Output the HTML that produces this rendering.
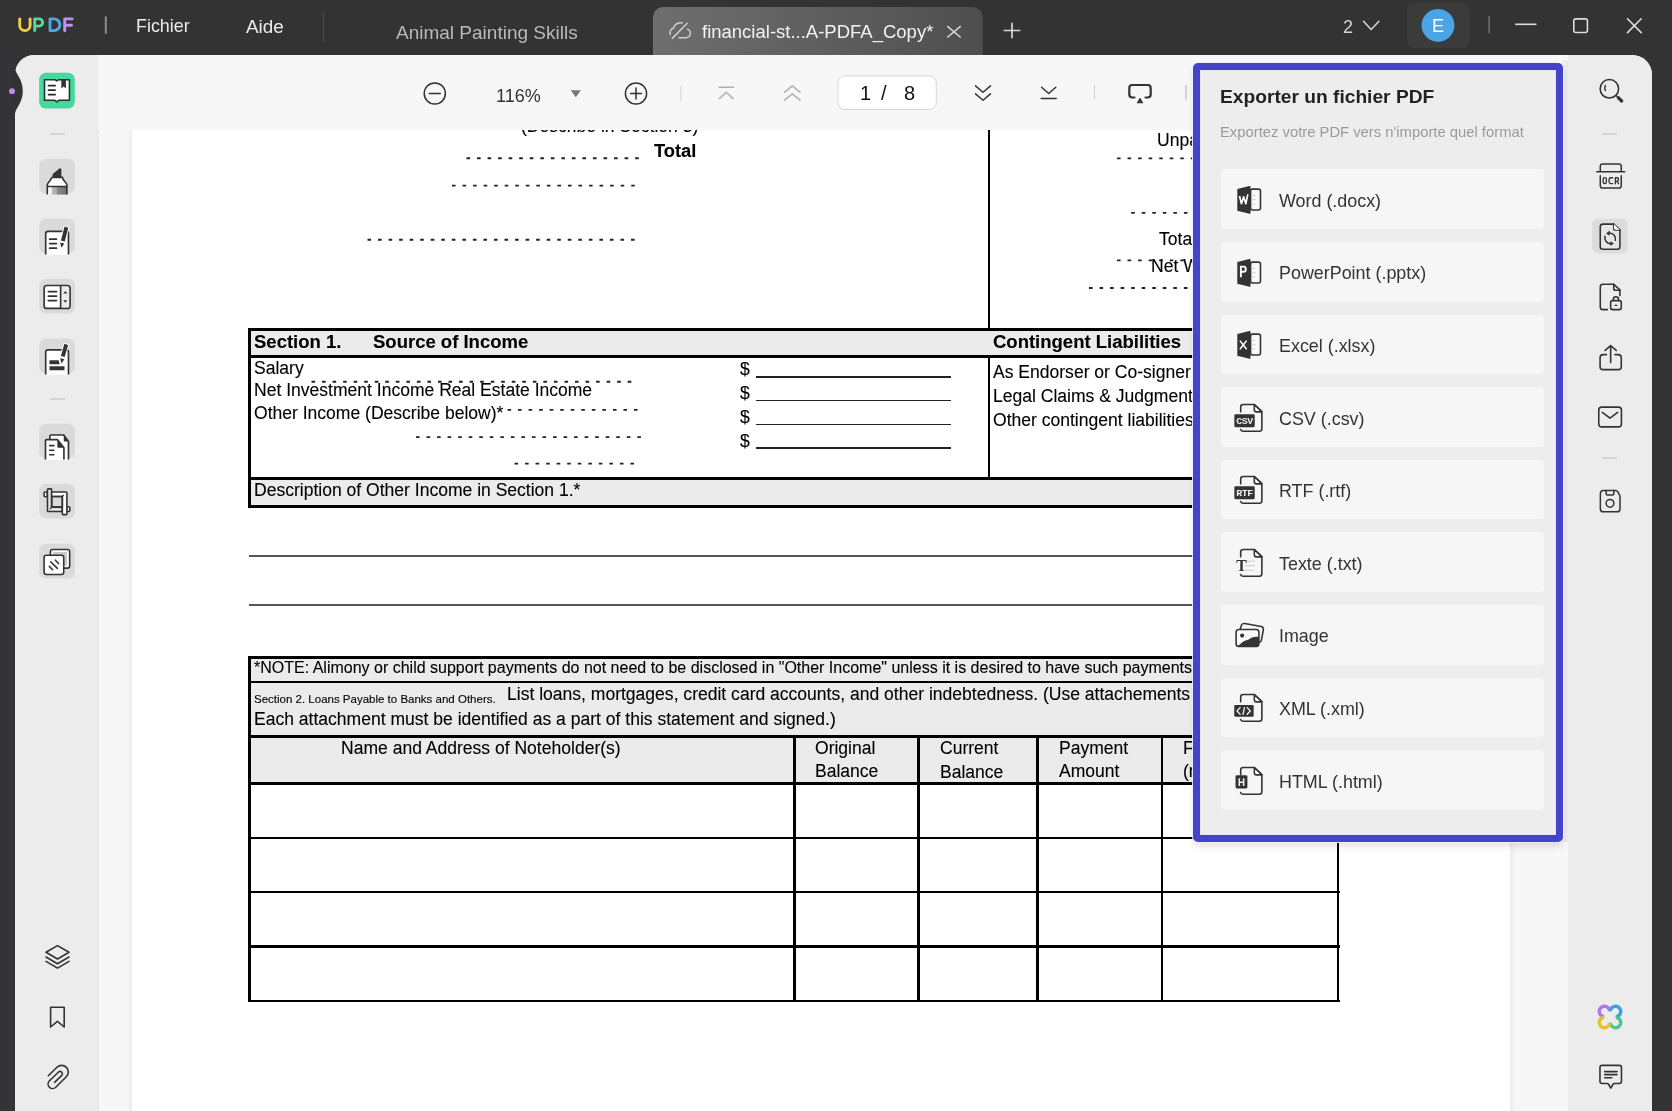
<!DOCTYPE html>
<html><head><meta charset="utf-8">
<style>
*{margin:0;padding:0;box-sizing:border-box}
html,body{width:1672px;height:1111px;overflow:hidden;background:#333333;font-family:"Liberation Sans",sans-serif}
.a{position:absolute}
.t{position:absolute;white-space:nowrap;line-height:1;will-change:transform}
svg{position:absolute;overflow:visible}
/* title bar */
#tb{left:0;top:0;width:1672px;height:55px;background:#333}
#dstrip{left:0;top:55px;width:15px;height:1056px;background:#343337}
#main{left:15px;top:55px;width:1637px;height:1056px;background:#f7f7f7;border-radius:20px 20px 0 0;overflow:hidden}
#lsb{left:15px;top:55px;width:83px;height:1056px;background:#ececec;border-top-left-radius:19px}
#rsb{left:1568px;top:55px;width:84px;height:1056px;background:#ececec;border-top-right-radius:20px}
#page{left:132px;top:130px;width:1378px;height:981px;background:#fff;overflow:hidden}
#pshL{left:127px;top:130px;width:5px;height:981px;background:linear-gradient(90deg,#f7f7f7,#ececec)}
#pshR{left:1510px;top:130px;width:6px;height:981px;background:linear-gradient(90deg,#ececec,#f7f7f7)}
#toolbar{left:98px;top:55px;width:1470px;height:75px;background:#f7f7f7}
.doc{font-family:"Liberation Sans",sans-serif;color:#000}
.doc .t{-webkit-text-stroke:0.12px #000}
.ui{font-family:"Liberation Sans",sans-serif}
.ib{position:absolute;background:#dcdcdc;border-radius:7px;width:36px;height:36px}
.sep{position:absolute;background:#d2d2d2}
/* panel */
#panel{left:1193px;top:63px;width:369.5px;height:778.5px;border:7px solid #4444c9;border-radius:5px;background:#ededed;box-shadow:inset 0 0 0 1px #e4e4fb,0 0 0 1px rgba(238,238,255,0.9),0 5px 6px rgba(0,0,0,0.10)}
.item{position:absolute;left:1220.5px;width:323.5px;height:59.5px;background:#f6f6f6;border-radius:4px}
.itxt{position:absolute;left:1279px;font-size:17.9px;color:#333;line-height:1;white-space:nowrap;will-change:transform}
</style></head><body>
<div id="tb" class="a"></div>
<div id="dstrip" class="a"></div>
<div id="main" class="a"></div>
<div id="lsb" class="a"></div>
<div id="rsb" class="a"></div>
<div id="pshL" class="a"></div>
<div id="pshR" class="a"></div>
<div id="page" class="a"><div class="a doc" id="docin" style="left:-132px;top:-130px;width:1672px;height:1111px">
<div class="t" style="left:520.8px;top:118.29px;font-size:17.55px;">(Describe in Section 3)</div>
<div class="t" style="left:654.3px;top:142.31px;font-size:18.3px;font-weight:bold;">Total</div>
<svg style="left:0;top:0" width="1" height="1"><line x1="466.5" y1="158.3" x2="640" y2="158.3" stroke="#222" stroke-width="1.9" stroke-dasharray="3.6 6.94"/></svg>
<svg style="left:0;top:0" width="1" height="1"><line x1="452" y1="185.6" x2="640" y2="185.6" stroke="#222" stroke-width="1.9" stroke-dasharray="3.6 6.94"/></svg>
<svg style="left:0;top:0" width="1" height="1"><line x1="367.5" y1="239.8" x2="640" y2="239.8" stroke="#222" stroke-width="1.9" stroke-dasharray="3.6 6.94"/></svg>
<div class="a" style="left:987.5px;top:130px;width:2.5px;height:348px;background:#000"></div>
<div class="t" style="left:1157.2px;top:132.09px;font-size:17.55px;">Unpaid</div>
<svg style="left:0;top:0" width="1" height="1"><line x1="1117" y1="158.4" x2="1200" y2="158.4" stroke="#222" stroke-width="1.9" stroke-dasharray="3.6 6.94"/></svg>
<svg style="left:0;top:0" width="1" height="1"><line x1="1131.2" y1="212.9" x2="1200" y2="212.9" stroke="#222" stroke-width="1.9" stroke-dasharray="3.6 6.94"/></svg>
<div class="t" style="left:1158.7px;top:230.79px;font-size:17.55px;">Total</div>
<svg style="left:0;top:0" width="1" height="1"><line x1="1117" y1="260.4" x2="1200" y2="260.4" stroke="#222" stroke-width="1.9" stroke-dasharray="3.6 6.94"/></svg>
<div class="t" style="left:1150.9px;top:257.59px;font-size:17.55px;">Net Worth</div>
<svg style="left:0;top:0" width="1" height="1"><line x1="1089" y1="288" x2="1200" y2="288" stroke="#222" stroke-width="1.9" stroke-dasharray="3.6 6.94"/></svg>
<div class="a" style="left:250px;top:330px;width:1350px;height:26px;background:#ebebeb"></div>
<div class="a" style="left:250px;top:479px;width:1350px;height:27px;background:#ebebeb"></div>
<div class="a" style="left:248px;top:328px;width:1352px;height:2.6px;background:#000"></div>
<div class="a" style="left:248px;top:355.3px;width:1352px;height:2.6px;background:#000"></div>
<div class="a" style="left:248px;top:477px;width:1352px;height:2.8px;background:#000"></div>
<div class="a" style="left:248px;top:505.3px;width:1352px;height:2.8px;background:#000"></div>
<div class="a" style="left:248px;top:328px;width:2.8px;height:180px;background:#000"></div>
<div class="t" style="left:254px;top:332.94px;font-size:18.5px;font-weight:bold;">Section 1.</div>
<div class="t" style="left:373px;top:332.94px;font-size:18.5px;font-weight:bold;">Source of Income</div>
<div class="t" style="left:993px;top:332.94px;font-size:18.5px;font-weight:bold;">Contingent Liabilities</div>
<div class="t" style="left:254px;top:360.39px;font-size:17.55px;">Salary</div>
<div class="t" style="left:254px;top:382.09px;font-size:17.55px;">Net Investment Income Real Estate Income</div>
<div class="t" style="left:254px;top:405.29px;font-size:17.55px;">Other Income (Describe below)*</div>
<svg style="left:0;top:0" width="1" height="1"><line x1="311.5" y1="381.7" x2="636" y2="381.7" stroke="#222" stroke-width="1.9" stroke-dasharray="3.6 6.94"/></svg>
<svg style="left:0;top:0" width="1" height="1"><line x1="507.5" y1="409.9" x2="642" y2="409.9" stroke="#222" stroke-width="1.9" stroke-dasharray="3.6 6.94"/></svg>
<svg style="left:0;top:0" width="1" height="1"><line x1="416" y1="437.1" x2="642" y2="437.1" stroke="#222" stroke-width="1.9" stroke-dasharray="3.6 6.94"/></svg>
<svg style="left:0;top:0" width="1" height="1"><line x1="514.5" y1="463.6" x2="638" y2="463.6" stroke="#222" stroke-width="1.9" stroke-dasharray="3.6 6.94"/></svg>
<div class="t" style="left:740.4px;top:361.09px;font-size:17.55px;">$</div>
<div class="t" style="left:740.4px;top:384.99px;font-size:17.55px;">$</div>
<div class="t" style="left:740.4px;top:408.99px;font-size:17.55px;">$</div>
<div class="t" style="left:740.4px;top:432.79px;font-size:17.55px;">$</div>
<div class="a" style="left:756px;top:376.0px;width:195px;height:1.6px;background:#222"></div>
<div class="a" style="left:756px;top:399.9px;width:195px;height:1.6px;background:#222"></div>
<div class="a" style="left:756px;top:423.9px;width:195px;height:1.6px;background:#222"></div>
<div class="a" style="left:756px;top:447.2px;width:195px;height:1.6px;background:#222"></div>
<div class="t" style="left:993px;top:363.79px;font-size:17.55px;">As Endorser or Co-signer</div>
<div class="t" style="left:993px;top:387.79px;font-size:17.55px;">Legal Claims &amp; Judgments</div>
<div class="t" style="left:993px;top:411.79px;font-size:17.55px;">Other contingent liabilities</div>
<div class="t" style="left:253.8px;top:481.79px;font-size:17.55px;">Description of Other Income in Section 1.*</div>
<div class="a" style="left:248.6px;top:554.8px;width:1351.4px;height:2.2px;background:#555"></div>
<div class="a" style="left:248.6px;top:603.9px;width:1351.4px;height:2.2px;background:#555"></div>
<div class="a" style="left:250px;top:658px;width:1350px;height:78px;background:#ebebeb"></div>
<div class="a" style="left:250px;top:737px;width:1088px;height:46px;background:#ebebeb"></div>
<div class="a" style="left:248px;top:655.7px;width:1352px;height:3px;background:#000"></div>
<div class="a" style="left:248px;top:680.9px;width:1352px;height:2.6px;background:#000"></div>
<div class="a" style="left:248px;top:734.8px;width:1092px;height:2.8px;background:#000"></div>
<div class="a" style="left:248px;top:782.4px;width:1092px;height:2.8px;background:#000"></div>
<div class="a" style="left:248px;top:836.6px;width:1092px;height:2.6px;background:#000"></div>
<div class="a" style="left:248px;top:890.5px;width:1092px;height:2.6px;background:#000"></div>
<div class="a" style="left:248px;top:945.1px;width:1092px;height:2.6px;background:#000"></div>
<div class="a" style="left:248px;top:999.8px;width:1092px;height:2.6px;background:#000"></div>
<div class="a" style="left:248px;top:655.7px;width:2.8px;height:346.29999999999995px;background:#000"></div>
<div class="a" style="left:793px;top:735px;width:2.6px;height:267px;background:#000"></div>
<div class="a" style="left:917.4px;top:735px;width:2.6px;height:267px;background:#000"></div>
<div class="a" style="left:1036.4px;top:735px;width:2.6px;height:267px;background:#000"></div>
<div class="a" style="left:1160.8px;top:735px;width:2.6px;height:267px;background:#000"></div>
<div class="a" style="left:1336.8px;top:735px;width:2.6px;height:267px;background:#000"></div>
<div class="t" style="left:254px;top:659.80px;font-size:16px;">*NOTE: Alimony or child support payments do not need to be disclosed in "Other Income" unless it is desired to have such payments included.</div>
<div class="t" style="left:254px;top:694.41px;font-size:11.5px;">Section 2. Loans Payable to Banks and Others.</div>
<div class="t" style="left:507px;top:685.79px;font-size:17.55px;">List loans, mortgages, credit card accounts, and other indebtedness. (Use attachements if necessary.)</div>
<div class="t" style="left:254px;top:710.79px;font-size:17.55px;">Each attachment must be identified as a part of this statement and signed.)</div>
<div class="t" style="left:341px;top:739.79px;font-size:17.55px;">Name and Address of Noteholder(s)</div>
<div class="t" style="left:815px;top:739.79px;font-size:17.55px;">Original</div>
<div class="t" style="left:815px;top:763.29px;font-size:17.55px;">Balance</div>
<div class="t" style="left:940.4px;top:740.29px;font-size:17.55px;">Current</div>
<div class="t" style="left:940.4px;top:763.79px;font-size:17.55px;">Balance</div>
<div class="t" style="left:1059.1px;top:739.79px;font-size:17.55px;">Payment</div>
<div class="t" style="left:1059.1px;top:763.29px;font-size:17.55px;">Amount</div>
<div class="t" style="left:1183.4px;top:739.79px;font-size:17.55px;">Frequency</div>
<div class="t" style="left:1183.4px;top:763.29px;font-size:17.55px;">(monthly)</div>

</div></div>
<div id="toolbar" class="a"></div>
<div class="a" style="left:1562px;top:60px;width:6px;height:782px;background:linear-gradient(90deg,#ececef,#e9e9e9)"></div>
<div id="panel" class="a"></div>
<svg style="left:0;top:0" width="1672" height="55">
<g fill="none" stroke-linecap="round" stroke-linejoin="round" stroke-width="2.9">
<path d="M19.7,18.9 V25.4 A5.2,5.2 0 0 0 30.1,25.4 V18.9" stroke="#f3cd45"/>
<path d="M34.7,30.6 V18.9 H39.1 A3.6,3.6 0 0 1 39.1,26.1 H34.7" stroke="#57d89c"/>
<path d="M50,18.9 H54 A5.85,5.85 0 0 1 54,30.6 H50 Z" stroke="#4ca9e2"/>
<path d="M72.1,18.9 H64.7 V30.7 M64.7,25.3 H71.5" stroke="#bf92f0"/>
</g>
<rect x="104.8" y="16.4" width="2" height="17.3" fill="#8c8c8c"/>
<rect x="323" y="12" width="1" height="30" fill="#4a4a4a"/>
<defs><linearGradient id="tabg" x1="0" x2="1" y1="0" y2="0"><stop offset="0" stop-color="#6e6e6e"/><stop offset="0.5" stop-color="#5f5f5f"/><stop offset="1" stop-color="#4e4e4e"/></linearGradient></defs>
<path d="M653,55 V17 A10,10 0 0 1 663,7 H972.6 A10,10 0 0 1 982.6,17 V55 Z" fill="url(#tabg)"/>
<g fill="none" stroke="#cdcdcd" stroke-width="1.5" stroke-linecap="round">
<path d="M687.2,23.3 L672.3,38.4"/>
<path d="M682.2,22.9 C678,22.4 674,24.5 673.3,28.3 C670.6,29 669.4,32 670.3,34.6"/>
<path d="M687.4,29.1 C689.6,30 690.6,32 690.3,34 C689.9,36.4 688,37.7 685.9,37.7 H678.9"/>
</g>
<g fill="none" stroke="#d8d8d8" stroke-width="1.6" stroke-linecap="round">
<path d="M947.8,26.6 L960.2,37 M960.2,26.6 L947.8,37"/>
</g>
<g fill="none" stroke="#d8d8d8" stroke-width="1.7">
<path d="M1003.6,30.5 H1020.4 M1012,22.7 V38.3"/>
</g>
<g fill="none" stroke="#d4d4d4" stroke-width="1.6" stroke-linecap="round" stroke-linejoin="round">
<path d="M1363.5,21.3 L1371.2,29.5 L1378.9,21.3"/>
</g>
<rect x="1406.7" y="3" width="63.2" height="45" rx="8" fill="#3b3b3b"/>
<circle cx="1438" cy="25.3" r="16.4" fill="#4aa5e6"/>
<rect x="1488.3" y="16" width="1.6" height="17.3" fill="#6e6e6e"/>
<rect x="1515.2" y="23.5" width="21.2" height="1.6" fill="#dcdcdc"/>
<rect x="1573.8" y="18.9" width="13.6" height="13.6" rx="2" fill="none" stroke="#dcdcdc" stroke-width="1.6"/>
<g fill="none" stroke="#dcdcdc" stroke-width="1.6" stroke-linecap="round">
<path d="M1627.5,18.8 L1641.2,32.6 M1641.2,18.8 L1627.5,32.6"/>
</g>
</svg>
<div class="t ui" style="left:136px;top:17.6px;font-size:17.9px;color:#ececec">Fichier</div>
<div class="t ui" style="left:246px;top:17.6px;font-size:18.9px;color:#ececec">Aide</div>
<div class="t ui" style="left:396px;top:22.7px;font-size:19px;color:#b9b9b9">Animal Painting Skills</div>
<div class="t ui" style="left:701.7px;top:22.7px;font-size:18.5px;color:#f2f2f2">financial-st...A-PDFA_Copy*</div>
<div class="t ui" style="left:1342.5px;top:17.6px;font-size:18px;color:#d4d4d4">2</div>
<div class="t ui" style="left:1432px;top:17.2px;font-size:18px;color:#fff">E</div>

<div class="a" style="left:97px;top:130px;width:1.8px;height:981px;background:#e7e7e7"></div>
<svg style="left:0;top:55px" width="100" height="70" viewBox="0 55 100 70">
<path d="M14,68 L15,68 C15.5,74 22.8,79 22.8,91 C22.8,103 15.5,108 15,114 L14,114 Z" fill="#333"/>
<circle cx="12" cy="91.2" r="2.9" fill="#b98ee8"/>
</svg>
<svg style="left:35px;top:69px" width="44" height="44" viewBox="0 0 1111 1111">
<rect x="105" y="95" width="900" height="905" rx="170" fill="#46d89e"/>
<path d="M240,270 H500 L550,300 L600,270 H870 V790 H600 L550,830 L500,790 H240 Z" fill="#fff" stroke="#163a2a" stroke-width="40" stroke-linejoin="round"/>
<path d="M340,420 H510 M340,535 H510 M340,648 H510" stroke="#2a2a2a" stroke-width="42" stroke-linecap="round"/>
<path d="M665,280 H780 V495 L722,445 L665,495 Z" fill="#333"/>
</svg>
<div class="sep" style="left:50px;top:133px;width:15px;height:2px;background:#d4d4d4"></div>
<!-- highlighter -->
<svg style="left:36px;top:154px" width="44" height="44" viewBox="0 0 1111 1111">
<defs><linearGradient id="hlg" x1="0" x2="1" y1="0" y2="0"><stop offset="0" stop-color="#fff"/><stop offset="0.2" stop-color="#f4f4f4"/><stop offset="0.25" stop-color="#bdbdbd"/><stop offset="0.5" stop-color="#a8a8a8"/><stop offset="0.52" stop-color="#8a8a8a"/><stop offset="1" stop-color="#6e6e6e"/></linearGradient>
<clipPath id="boxclip"><rect x="0" y="0" width="1111" height="1030"/></clipPath></defs>
<rect x="80" y="120" width="905" height="880" rx="175" fill="#dadada"/>
<path d="M415,590 L420,505 L600,360 Q640,345 640,400 L640,590 Z" fill="#333"/>
<path d="M395,590 H665 C680,680 780,720 780,780 V820 H285 V780 C285,720 380,680 395,590 Z" fill="#fff"/>
<rect x="285" y="820" width="495" height="205" fill="url(#hlg)"/>
<path d="M395,590 H665 C680,680 780,720 780,780 V1025 M285,1025 V780 C285,720 380,680 395,590 M285,820 H780" fill="none" stroke="#333" stroke-width="42"/>
</svg>
<!-- edit -->
<svg style="left:36px;top:214px" width="44" height="44" viewBox="0 0 1111 1111">
<rect x="80" y="120" width="905" height="880" rx="175" fill="#dadada"/>
<path d="M245,1030 V500 Q245,440 305,440 H760 Q820,440 820,500 V1030 Z" fill="#fff"/>
<path d="M245,1025 V500 Q245,440 305,440 H760 Q820,440 820,500 V1025" fill="none" stroke="#333" stroke-width="42"/>
<path d="M345,635 H515 M345,748 H515 M345,862 H515" stroke="#333" stroke-width="45" stroke-linecap="round"/>
<path d="M705,290 L840,330 L745,725 L595,690 Z" fill="#fff"/>
<path d="M720,315 L815,345 L725,695 L630,670 Z" fill="#333"/>
<path d="M610,720 L715,745 L640,850 Z" fill="#333"/>
</svg>
<!-- form -->
<svg style="left:36px;top:274px" width="44" height="44" viewBox="0 0 1111 1111">
<rect x="80" y="120" width="905" height="880" rx="175" fill="#dadada"/>
<rect x="205" y="290" width="655" height="580" rx="70" fill="#fff" stroke="#333" stroke-width="42"/>
<rect x="640" y="330" width="195" height="510" fill="#ececec"/>
<path d="M622,290 V870" stroke="#333" stroke-width="42"/>
<path d="M310,445 H520 M310,560 H520 M310,672 H520" stroke="#333" stroke-width="42" stroke-linecap="round"/>
<path d="M690,495 H790 L740,430 Z M690,665 H790 L740,725 Z" fill="#333"/>
</svg>
<!-- sign -->
<svg style="left:36px;top:334px" width="44" height="44" viewBox="0 0 1111 1111">
<rect x="80" y="120" width="905" height="880" rx="175" fill="#dadada"/>
<path d="M245,1030 V455 Q245,400 305,400 H760 Q820,400 820,455 V1030 Z" fill="#fff"/>
<path d="M245,1025 V455 Q245,400 305,400 H760 Q820,400 820,455 V1025" fill="none" stroke="#333" stroke-width="42"/>
<path d="M700,220 L835,255 L745,610 L595,575 Z" fill="#fff"/>
<path d="M715,245 L810,275 L725,580 L630,555 Z" fill="#333"/>
<path d="M610,610 L720,640 L640,745 Z" fill="#333"/>
<path d="M340,665 H570 L600,765 H340 Z M340,815 H720 V915 H340 Z" fill="#333"/>
</svg>
<div class="sep" style="left:50px;top:398px;width:15px;height:2px;background:#d4d4d4"></div>
<!-- organize -->
<svg style="left:36px;top:419px" width="44" height="44" viewBox="0 0 1111 1111">
<rect x="80" y="120" width="905" height="880" rx="175" fill="#dadada"/>
<path d="M350,520 V430 Q350,405 375,405 H700 L820,570 V1030 H350 Z" fill="#fff"/>
<path d="M350,520 V430 Q350,405 375,405 H700 L820,570 V1025" fill="none" stroke="#333" stroke-width="42" stroke-linejoin="round"/>
<path d="M700,405 V545 Q700,570 725,570 H820 Z" fill="#333"/>
<path d="M240,1030 V545 Q240,520 265,520 H540 L705,725 V1030 Z" fill="#fff"/>
<path d="M240,1025 V545 Q240,520 265,520 H540 L705,725 V1025" fill="none" stroke="#333" stroke-width="42" stroke-linejoin="round"/>
<path d="M540,520 V700 Q540,725 565,725 H705 Z" fill="#333"/>
<path d="M345,672 H450 M345,790 H450 M345,902 H450" stroke="#333" stroke-width="42" stroke-linecap="round"/>
</svg>
<!-- crop -->
<svg style="left:36px;top:479px" width="44" height="44" viewBox="0 0 1111 1111">
<rect x="80" y="120" width="905" height="880" rx="175" fill="#dadada"/>
<g fill="#fff" stroke="#333" stroke-width="40" stroke-linejoin="round">
<rect x="205" y="330" width="80" height="120" rx="25"/>
<rect x="775" y="700" width="80" height="120" rx="25"/>
<path d="M290,270 Q290,250 310,250 H375 Q395,250 395,270 V710 H660 V820 H310 Q290,820 290,800 Z" fill="#e4e4e4"/>
<path d="M395,330 H755 Q780,330 780,355 V880 Q780,900 760,900 H685 Q665,900 665,880 V440 H395 Z"/>
</g>
<path d="M395,440 H665 V710 H395 Z" fill="none" stroke="#333" stroke-width="40"/>
<path d="M350,760 L395,715 M665,440 L705,400" stroke="#333" stroke-width="30"/>
</svg>
<!-- compare -->
<svg style="left:36px;top:539px" width="44" height="44" viewBox="0 0 1111 1111">
<rect x="80" y="120" width="905" height="880" rx="175" fill="#dadada"/>
<rect x="365" y="265" width="485" height="470" rx="55" fill="#fff" stroke="#333" stroke-width="40"/>
<rect x="430" y="330" width="350" height="340" fill="#c8c8c8"/>
<rect x="205" y="410" width="495" height="485" rx="55" fill="#fff" stroke="#333" stroke-width="40"/>
<path d="M370,575 L540,740 M490,535 L570,620 M335,690 L420,775" stroke="#333" stroke-width="40" stroke-linecap="round"/>
</svg>
<!-- bottom icons -->
<svg style="left:0;top:0" width="1" height="1">
<g fill="none" stroke="#333" stroke-width="1.6" stroke-linejoin="round" stroke-linecap="round">
<path d="M57.5,945.6 L69,952.3 L57.5,959 L46,952.3 Z"/>
<path d="M46,957 L57.5,963.7 L69,957"/>
<path d="M46,961.4 L57.5,968.1 L69,961.4"/>
<path d="M50.6,1007.3 H64.2 V1027 L57.4,1021.3 L50.6,1027 Z"/>

</g>
</svg>
<svg style="left:36px;top:1056px" width="44" height="44" viewBox="0 0 1111 1111">
<path d="M310,500 L530,285 A160,160 0 0 1 765,525 L500,790 A115,115 0 0 1 335,630 L575,398 A60,60 0 0 1 652,488 L470,665" fill="none" stroke="#333" stroke-width="40" stroke-linecap="round" stroke-linejoin="round"/>
</svg>

<svg style="left:1588px;top:68px" width="44" height="44" viewBox="0 0 1111 1111">
<g fill="none" stroke="#333" stroke-linecap="round">
<circle cx="540" cy="525" r="233" stroke-width="40"/>
<path d="M440,440 Q405,505 440,570" stroke-width="36"/>
<path d="M715,700 L765,750" stroke-width="40"/>
<path d="M770,755 L850,832" stroke-width="85"/>
</g>
</svg>
<div class="sep" style="left:1602px;top:133px;width:15px;height:2px;background:#d4d4d4"></div>
<svg style="left:1588px;top:154px" width="44" height="44" viewBox="0 0 1111 1111">
<g fill="none" stroke="#333" stroke-width="38" stroke-linecap="round" stroke-linejoin="round">
<path d="M310,430 V310 Q310,255 370,255 H780 Q840,255 840,310 V430"/>
<path d="M222,448 H925" stroke-width="42"/>
<path d="M310,550 V800 Q310,860 370,860 H780 Q840,860 840,800 V550"/>
<rect x="382" y="598" width="82" height="148" rx="41" stroke-width="34"/>
<path d="M622,600 H578 Q532,600 532,645 V703 Q532,748 578,748 H622" stroke-width="34"/>
<path d="M692,752 V600 H728 Q772,600 772,646 Q772,690 728,690 H692 M736,690 L772,752" stroke-width="34"/>
</g>
</svg>
<svg style="left:1588px;top:214px" width="44" height="44" viewBox="0 0 1111 1111">
<rect x="105" y="120" width="900" height="880" rx="150" fill="#dcdcdc"/>
<g fill="none" stroke="#333" stroke-width="40" stroke-linecap="round" stroke-linejoin="round">
<path d="M310,320 Q310,255 380,255 H650 L805,400 V830 Q805,890 745,890 H370 Q310,890 310,830 Z" fill="#e6e6e6"/>
<path d="M650,255 V360 Q650,405 700,405 H805"/>
<path d="M690,665 A150,150 0 0 0 545,478"/>
<path d="M428,565 A150,150 0 0 0 575,748"/>
</g>
<path d="M655,260 L800,395 L700,395 Q660,395 655,355 Z" fill="#fff"/>
<path d="M545,418 L455,490 L550,550 Z M565,685 L655,745 L565,810 Z" fill="#333"/>
</svg>
<svg style="left:1588px;top:275px" width="44" height="44" viewBox="0 0 1111 1111">
<g fill="none" stroke="#333" stroke-width="40" stroke-linecap="round" stroke-linejoin="round">
<path d="M490,875 H380 Q310,875 310,805 V300 Q310,235 380,235 H650 L805,375 V520"/>
<path d="M650,235 V340 Q650,385 695,385 H805"/>
<rect x="572" y="648" width="268" height="226" rx="48"/>
<path d="M640,645 V612 Q640,548 705,548 Q770,548 770,612 V645"/>
<path d="M682,765 H728" stroke-width="32"/>
</g>
</svg>
<svg style="left:1588px;top:336px" width="44" height="44" viewBox="0 0 1111 1111">
<g fill="none" stroke="#333" stroke-width="40" stroke-linecap="round" stroke-linejoin="round">
<path d="M465,470 H385 Q305,470 305,550 V775 Q305,850 385,850 H765 Q840,850 840,775 V550 Q840,470 760,470 H680"/>
<path d="M572,672 V250 M432,365 L572,242 L713,365"/>
</g>
</svg>
<svg style="left:1588px;top:394px" width="44" height="44" viewBox="0 0 1111 1111">
<g fill="none" stroke="#333" stroke-width="40" stroke-linecap="round" stroke-linejoin="round">
<rect x="272" y="332" width="572" height="498" rx="75"/>
<path d="M362,465 L555,612 L748,465"/>
</g>
</svg>
<div class="sep" style="left:1602px;top:457px;width:15px;height:2px;background:#d4d4d4"></div>
<svg style="left:1588px;top:478px" width="44" height="44" viewBox="0 0 1111 1111">
<g fill="none" stroke="#333" stroke-width="38" stroke-linecap="round" stroke-linejoin="round">
<path d="M312,395 Q312,315 390,315 H700 Q728,315 752,348 L795,425 Q808,450 808,480 V780 Q808,852 735,852 H382 Q312,852 312,780 Z"/>
<path d="M458,318 V382 Q458,432 510,432 H600 Q652,432 652,382 V318"/>
<circle cx="555" cy="640" r="98"/>
</g>
</svg>
<svg style="left:1588px;top:995px" width="44" height="44" viewBox="0 0 1111 1111">
<g fill="none" stroke-width="86" stroke-linecap="round">
<path d="M370.5,537 A130,130 0 1 1 537,370.5" stroke="#ab78e8"/>
<path d="M573,370.5 A130,130 0 1 1 739.5,537" stroke="#3ca3de"/>
<path d="M739.5,573 A130,130 0 1 1 573,739.5" stroke="#45c98f"/>
<path d="M537,739.5 A130,130 0 1 1 370.5,573" stroke="#e9bf2c"/>
</g>
</svg>
<svg style="left:1588px;top:1054px" width="44" height="44" viewBox="0 0 1111 1111">
<g fill="none" stroke="#333" stroke-width="40" stroke-linecap="round" stroke-linejoin="round">
<path d="M355,288 H790 Q845,288 845,343 V690 Q845,745 790,745 H662 Q642,745 628,770 L575,860 L522,770 Q508,745 488,745 H355 Q302,745 302,690 V343 Q302,288 355,288 Z"/>
<path d="M420,445 H735 M420,520 H735 M420,598 H600"/>
</g>
</svg>

<svg style="left:0;top:0" width="1" height="1">
<g fill="none" stroke="#333" stroke-width="1.5" stroke-linecap="round" stroke-linejoin="round">
<circle cx="434.8" cy="93.5" r="10.6"/>
<path d="M429.3,93.5 H440.3"/>
<circle cx="636" cy="93.5" r="10.6"/>
<path d="M630.5,93.5 H641.5 M636,88 V99"/>
</g>
<path d="M570.7,90.2 H580.9 L575.8,97.2 Z" fill="#787878"/>
<rect x="680.4" y="86" width="1" height="14.5" fill="#d0d0d0"/>
<g fill="none" stroke="#b0b0b0" stroke-width="1.5" stroke-linecap="round" stroke-linejoin="round">
<path d="M719,87.2 H733.6 M719.5,98.6 L726.3,92.2 L733,98.6"/>
<path d="M784.6,92.2 L792.3,85.9 L800,92.2 M784.6,100.2 L792.3,93.9 L800,100.2"/>
</g>
<rect x="838" y="75.9" width="98.3" height="33.6" rx="7" fill="#fff" stroke="#d6d6d6" stroke-width="1"/>
<g fill="none" stroke="#333" stroke-width="1.5" stroke-linecap="round" stroke-linejoin="round">
<path d="M975.5,85.9 L983,92.2 L990.5,85.9 M975.5,93.9 L983,100.2 L990.5,93.9"/>
<path d="M1041.6,87.2 L1048.7,93.5 L1055.8,87.2 M1041.2,98.6 H1056.2"/>
</g>
<rect x="1094" y="85" width="1" height="14.6" fill="#cfcfcf"/>
<path d="M1134.5,97.5 H1132.2 Q1129.3,97.5 1129.3,94.6 V87.9 Q1129.3,85 1132.2,85 H1147.8 Q1150.7,85 1150.7,87.9 V94.6 Q1150.7,97.5 1147.8,97.5 H1145.5" fill="none" stroke="#333" stroke-width="2.2" stroke-linecap="round"/>
<path d="M1136.6,103.3 H1143.4 L1140,97.6 Z" fill="#333"/>
<rect x="1185" y="85" width="2" height="14.6" fill="#d2d2d2"/>
</svg>
<div class="t ui" style="left:496.4px;top:86.8px;font-size:18px;color:#333">116%</div>
<div class="t ui" style="left:860.4px;top:83px;font-size:20px;color:#111">1</div>
<div class="t ui" style="left:881.4px;top:83px;font-size:20px;color:#111">/</div>
<div class="t ui" style="left:903.5px;top:83px;font-size:20px;color:#111">8</div>

<div class="t ui" style="left:1219.5px;top:86.9px;font-size:19.2px;font-weight:bold;color:#222">Exporter un fichier PDF</div>
<div class="t ui" style="left:1219.5px;top:125.4px;font-size:14.8px;color:#9a9a9a">Exportez votre PDF vers n'importe quel format</div>
<div class="item" style="top:169.4px"></div>
<svg style="left:1228px;top:178.0px" width="44" height="44" viewBox="0 0 1111 1111"><path d="M235,275 L540,200 Q570,195 570,230 V870 Q570,905 540,900 L235,825 Z" fill="#333"/><rect x="570" y="280" width="250" height="530" rx="50" fill="#fafafa" stroke="#333" stroke-width="40"/><path d="M585,440 H690 M585,548 H700 M585,655 H690" stroke="#ccc" stroke-width="25"/><path d="M290,455 L340,650 L395,475 L450,650 L500,415" fill="none" stroke="#fff" stroke-width="42" stroke-linejoin="round"/></svg>
<div class="itxt" style="top:192.8px">Word (.docx)</div>
<div class="item" style="top:242.0px"></div>
<svg style="left:1228px;top:250.6px" width="44" height="44" viewBox="0 0 1111 1111"><path d="M235,275 L540,200 Q570,195 570,230 V870 Q570,905 540,900 L235,825 Z" fill="#333"/><rect x="570" y="280" width="250" height="530" rx="50" fill="#fafafa" stroke="#333" stroke-width="40"/><path d="M585,440 H690 M585,548 H700 M585,655 H690" stroke="#ccc" stroke-width="25"/><path d="M325,660 V395 H400 Q450,395 450,460 Q450,525 395,525 H340" fill="none" stroke="#fff" stroke-width="48"/></svg>
<div class="itxt" style="top:265.4px">PowerPoint (.pptx)</div>
<div class="item" style="top:314.6px"></div>
<svg style="left:1228px;top:323.2px" width="44" height="44" viewBox="0 0 1111 1111"><path d="M235,275 L540,200 Q570,195 570,230 V870 Q570,905 540,900 L235,825 Z" fill="#333"/><rect x="570" y="280" width="250" height="530" rx="50" fill="#fafafa" stroke="#333" stroke-width="40"/><path d="M585,440 H690 M585,548 H700 M585,655 H690" stroke="#ccc" stroke-width="25"/><path d="M300,445 L470,665 M470,445 L300,665" fill="none" stroke="#fff" stroke-width="40"/></svg>
<div class="itxt" style="top:338.0px">Excel (.xlsx)</div>
<div class="item" style="top:387.2px"></div>
<svg style="left:1228px;top:395.8px" width="44" height="44" viewBox="0 0 1111 1111"><path d="M320,400 V275 Q320,215 385,215 H665 L855,395 V830 Q855,890 795,890 H385 Q335,890 318,845" fill="none" stroke="#333" stroke-width="40" stroke-linecap="round" stroke-linejoin="round"/><path d="M665,215 V345 Q665,400 715,400 H855 Z" fill="#fff" stroke="#333" stroke-width="40" stroke-linejoin="round"/><rect x="160" y="462" width="515" height="325" rx="28" fill="#333"/><text x="417" y="710" font-family="Liberation Mono" font-weight="bold" font-size="250" fill="#eee" text-anchor="middle" letter-spacing="-10">CSV</text></svg>
<div class="itxt" style="top:410.6px">CSV (.csv)</div>
<div class="item" style="top:459.8px"></div>
<svg style="left:1228px;top:468.4px" width="44" height="44" viewBox="0 0 1111 1111"><path d="M320,400 V275 Q320,215 385,215 H665 L855,395 V830 Q855,890 795,890 H385 Q335,890 318,845" fill="none" stroke="#333" stroke-width="40" stroke-linecap="round" stroke-linejoin="round"/><path d="M665,215 V345 Q665,400 715,400 H855 Z" fill="#fff" stroke="#333" stroke-width="40" stroke-linejoin="round"/><rect x="160" y="462" width="515" height="325" rx="28" fill="#333"/><text x="417" y="710" font-family="Liberation Mono" font-weight="bold" font-size="250" fill="#eee" text-anchor="middle" letter-spacing="-10">RTF</text></svg>
<div class="itxt" style="top:483.2px">RTF (.rtf)</div>
<div class="item" style="top:532.4px"></div>
<svg style="left:1228px;top:541.0px" width="44" height="44" viewBox="0 0 1111 1111"><path d="M320,400 V275 Q320,215 385,215 H665 L855,395 V830 Q855,890 795,890 H385 Q335,890 318,845" fill="none" stroke="#333" stroke-width="40" stroke-linecap="round" stroke-linejoin="round"/><path d="M665,215 V345 Q665,400 715,400 H855 Z" fill="#fff" stroke="#333" stroke-width="40" stroke-linejoin="round"/><path d="M435,510 H680 M435,625 H680 M435,740 H640" stroke="#ccc" stroke-width="25"/><text x="340" y="745" font-family="Liberation Serif" font-weight="bold" font-size="400" fill="#333" text-anchor="middle">T</text></svg>
<div class="itxt" style="top:555.8px">Texte (.txt)</div>
<div class="item" style="top:605.0px"></div>
<svg style="left:1228px;top:613.6px" width="44" height="44" viewBox="0 0 1111 1111"><path d="M312,375 L335,290 Q355,230 420,242 L838,315 Q905,330 893,395 L843,668 Q833,715 785,712" fill="none" stroke="#333" stroke-width="40" stroke-linecap="round"/><rect x="205" y="392" width="575" height="428" rx="70" fill="#fafafa" stroke="#333" stroke-width="40"/><circle cx="357" cy="545" r="52" fill="#333"/><path d="M245,815 L385,695 Q440,665 520,645 Q600,572 700,572 H782 V760 Q782,822 720,822 H255 Z" fill="#333"/></svg>
<div class="itxt" style="top:628.4px">Image</div>
<div class="item" style="top:677.6px"></div>
<svg style="left:1228px;top:686.2px" width="44" height="44" viewBox="0 0 1111 1111"><path d="M320,400 V275 Q320,215 385,215 H665 L855,395 V830 Q855,890 795,890 H385 Q335,890 318,845" fill="none" stroke="#333" stroke-width="40" stroke-linecap="round" stroke-linejoin="round"/><path d="M665,215 V345 Q665,400 715,400 H855 Z" fill="#fff" stroke="#333" stroke-width="40" stroke-linejoin="round"/><rect x="158" y="482" width="490" height="295" rx="28" fill="#333"/><path d="M305,545 L228,630 L305,715 M485,545 L562,630 L485,715 M415,545 L378,715" fill="none" stroke="#eee" stroke-width="34" stroke-linecap="round" stroke-linejoin="round"/></svg>
<div class="itxt" style="top:701.0px">XML (.xml)</div>
<div class="item" style="top:750.2px"></div>
<svg style="left:1228px;top:758.8px" width="44" height="44" viewBox="0 0 1111 1111"><path d="M320,400 V275 Q320,215 385,215 H665 L855,395 V830 Q855,890 795,890 H385 Q335,890 318,845" fill="none" stroke="#333" stroke-width="40" stroke-linecap="round" stroke-linejoin="round"/><path d="M665,215 V345 Q665,400 715,400 H855 Z" fill="#fff" stroke="#333" stroke-width="40" stroke-linejoin="round"/><rect x="190" y="410" width="300" height="335" rx="35" fill="#333"/><path d="M285,485 V680 M395,485 V680 M285,585 H395" fill="none" stroke="#eee" stroke-width="40"/></svg>
<div class="itxt" style="top:773.6px">HTML (.html)</div>

</body></html>
